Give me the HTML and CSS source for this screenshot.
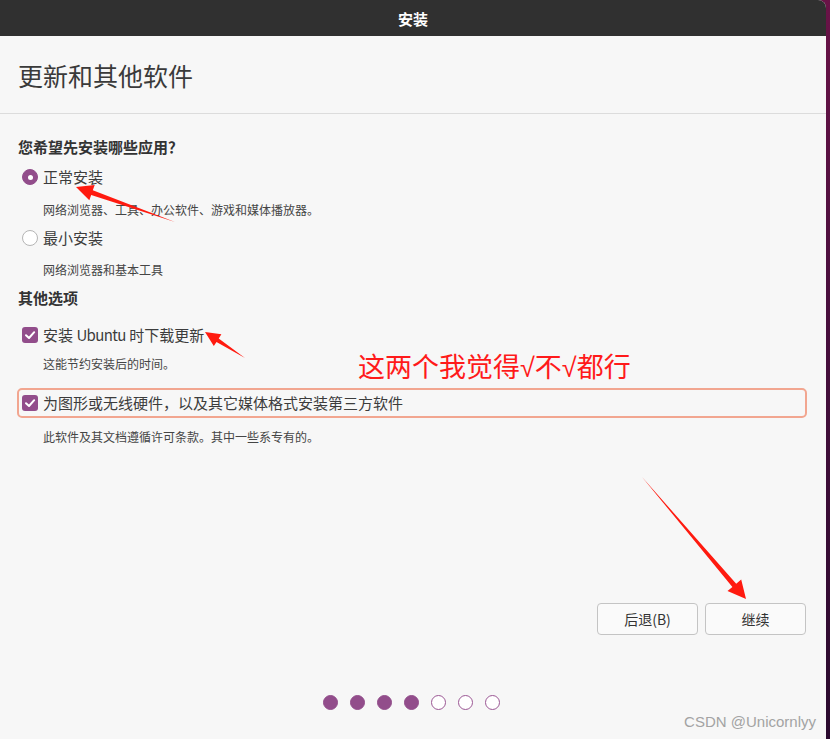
FILE: index.html
```html
<!DOCTYPE html>
<html lang="zh-CN">
<head>
<meta charset="utf-8">
<title>安装</title>
<link rel="stylesheet" href="styles.css">
</head>
<body>
<div class="window">
  <div class="titlebar">安装</div>
  <div class="header"><h1 class="page-title">更新和其他软件</h1></div>
  <div class="main">
    <div class="section-title st1">您希望先安装哪些应用？</div>
    <div class="opt r1"><span class="radio checked"></span><span class="label">正常安装</span></div>
    <div class="desc d1">网络浏览器、工具、办公软件、游戏和媒体播放器。</div>
    <div class="opt r2"><span class="radio"></span><span class="label">最小安装</span></div>
    <div class="desc d2">网络浏览器和基本工具</div>
    <div class="section-title st2">其他选项</div>
    <div class="opt c1"><span class="check"><svg viewBox="0 0 16 16" width="16" height="16"><path d="M4 8.2 L7 11 L12.2 5.2" fill="none" stroke="#fff" stroke-width="2" stroke-linecap="round" stroke-linejoin="round"/></svg></span><span class="label">安装 <span class="latin">Ubuntu</span> 时下载更新</span></div>
    <div class="desc d3">这能节约安装后的时间。</div>
    <div class="opt focus"><span class="check"><svg viewBox="0 0 16 16" width="16" height="16"><path d="M4 8.2 L7 11 L12.2 5.2" fill="none" stroke="#fff" stroke-width="2" stroke-linecap="round" stroke-linejoin="round"/></svg></span><span class="label">为图形或无线硬件，以及其它媒体格式安装第三方软件</span></div>
    <div class="desc d4">此软件及其文档遵循许可条款。其中一些系专有的。</div>
  </div>
  <div class="actions">
    <button class="btn">后退(B)</button>
    <button class="btn">继续</button>
  </div>
  <div class="dots">
    <span class="dot on"></span><span class="dot on"></span><span class="dot on"></span><span class="dot on"></span><span class="dot"></span><span class="dot"></span><span class="dot"></span>
  </div>
</div>
<div class="note">这两个我觉得√不√都行</div>
<div class="watermark">CSDN @Unicornlyy</div>
<svg class="arrows" width="830" height="739" viewBox="0 0 830 739">
  <polygon fill="#ff1a0f" points="175,222 92.8,190.3 94.7,185.1 76,187 89.3,200.2 91.2,195.1"/>
  <polygon fill="#ff1a0f" points="245,358 218.7,338.5 221.4,334.3 205,332 213.8,346.1 216.5,341.9"/>
  <polygon fill="#ff1a0f" points="642,477 732.4,586.9 727.5,591.1 746,599 741.2,579.5 736.2,583.7"/>
</svg>
</body>
</html>
```
FILE: styles.css
```css
html, body {
  margin: 0;
  padding: 0;
}
body {
  width: 830px;
  height: 739px;
  overflow: hidden;
  position: relative;
  background: linear-gradient(180deg, #6a1347 0%, #4a0f3e 40%, #2a0a2e 100%);
  font-family: "Noto Sans CJK SC", "Noto Sans", sans-serif;
  color: #3c3c3c;
}
.window {
  width: 826px;
  height: 739px;
  background: #f7f7f7;
  border-top-right-radius: 8px;
  overflow: hidden;
  display: flex;
  flex-direction: column;
}
.titlebar {
  height: 36px;
  flex: none;
  background: #303030;
  color: #ffffff;
  font-weight: bold;
  font-size: 15px;
  display: flex;
  align-items: center;
  justify-content: center;
}
.header {
  height: 77px;
  flex: none;
  display: flex;
  align-items: center;
  padding-left: 18px;
  border-bottom: 1px solid #dcdcdc;
}
.page-title {
  margin: 0;
  font-size: 25px;
  font-weight: normal;
  color: #3a3a3a;
  line-height: 30px;
}
.main {
  flex: 1;
  padding: 0 18px;
  display: flex;
  flex-direction: column;
}
.section-title {
  font-size: 15px;
  font-weight: bold;
  line-height: 20px;
  height: 20px;
  color: #333;
}
.st1 { margin-top: 23px; }
.st2 { margin-top: 8px; }
.opt {
  display: flex;
  align-items: center;
  gap: 5px;
  padding-left: 4px;
  height: 20px;
}
.r1 { margin-top: 10px; }
.r2 { margin-top: 8px; }
.c1 { margin-top: 17px; }
.opt.focus {
  box-sizing: border-box;
  width: 790px;
  height: 30px;
  margin-left: -1px;
  padding-left: 3px;
  border: 2px solid #f2a690;
  border-radius: 5px;
  margin-top: 14px;
}
.label {
  font-size: 15px;
  line-height: 20px;
  color: #3c3c3c;
  white-space: nowrap;
}
.latin {
  letter-spacing: -0.6px;
}
.radio {
  box-sizing: border-box;
  width: 16px;
  height: 16px;
  border-radius: 50%;
  border: 1px solid #b5b5b5;
  background: #ffffff;
  flex: none;
  position: relative;
}
.radio.checked {
  border-color: #924d8b;
  background: #924d8b;
}
.radio.checked::after {
  content: "";
  position: absolute;
  left: 4.5px;
  top: 4.5px;
  width: 5px;
  height: 5px;
  border-radius: 50%;
  background: #ffffff;
}
.check {
  width: 16px;
  height: 16px;
  border-radius: 3px;
  background: #924d8b;
  flex: none;
  display: flex;
}
.desc {
  font-size: 12px;
  line-height: 20px;
  height: 20px;
  padding-left: 25px;
  color: #454545;
}
.d1 { margin-top: 13px; }
.d2 { margin-top: 12px; }
.d3 { margin-top: 9px; }
.d4 { margin-top: 9px; }
.actions {
  flex: none;
  display: flex;
  justify-content: flex-end;
  gap: 7px;
  padding-right: 20px;
  margin-bottom: 60px;
}
.btn {
  width: 101px;
  height: 32px;
  box-sizing: border-box;
  border: 1px solid #c4c4c4;
  border-radius: 4px;
  background: #fafafa;
  font-family: "Noto Sans CJK SC", "Noto Sans", sans-serif;
  font-size: 14px;
  color: #333;
  padding: 0;
}
.dots {
  flex: none;
  display: flex;
  justify-content: center;
  gap: 12px;
  padding-right: 4px;
  height: 15px;
  margin-bottom: 29px;
}
.dot {
  box-sizing: border-box;
  width: 15px;
  height: 15px;
  border-radius: 50%;
  border: 1.5px solid #9b5794;
  background: #ffffff;
}
.dot.on {
  background: #924d8b;
  border-color: #924d8b;
}
.note {
  position: absolute;
  left: 358px;
  top: 352px;
  font-family: "Liberation Sans", "Noto Sans CJK SC", sans-serif;
  font-size: 27px;
  line-height: 32px;
  color: #ff1a1a;
  white-space: nowrap;
}
.watermark {
  position: absolute;
  right: 14px;
  top: 712px;
  font-family: "Liberation Sans", Arial, sans-serif;
  font-size: 15px;
  line-height: 20px;
  color: #a3a3a3;
}
.arrows {
  position: absolute;
  left: 0;
  top: 0;
  pointer-events: none;
}
```
